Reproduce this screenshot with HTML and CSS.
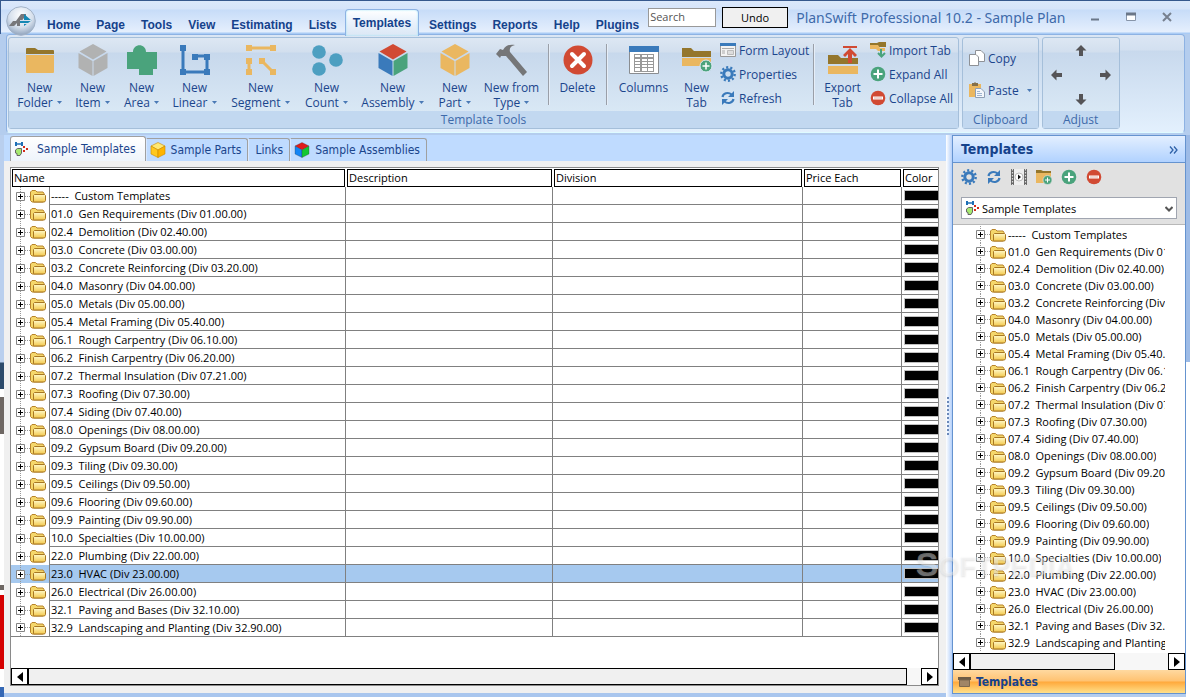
FILE: index.html
```
<!DOCTYPE html>
<html lang="en">
<head>
  <meta charset="UTF-8">
  <title>PlanSwift Professional 10.2 - Sample Plan</title>
  <link rel="stylesheet" href="styles.css">
</head>
<body>

  <!-- shared icons -->
  <svg class="defs" width="0" height="0">
    <linearGradient id="gold" x1="0" y1="0" x2="0" y2="1">
      <stop offset="0" stop-color="#fff9c8"/><stop offset="1" stop-color="#f3c84c"/>
    </linearGradient>
    <symbol id="i-folder" viewBox="0 0 16 14">
      <path d="M.5 11.500V3L2 1.500H5.500L7 3H13L14 4.500V12L13 13H2Z" fill="#f5d76b" stroke="#b8842b"/>
      <path d="M3.500 12.500V6.500L4.500 5.500H14.500L15.500 6.500V11.500L14.500 13H3.500Z" fill="url(#gold)" stroke="#a87722"/>
    </symbol>
    <symbol id="i-gear" viewBox="0 0 16 16">
      <circle cx="8" cy="8" r="4.200" fill="none" stroke="#3a7abb" stroke-width="3"/>
      <circle cx="8" cy="8" r="6.700" fill="none" stroke="#3a7abb" stroke-width="2.400" stroke-dasharray="2.100 2.110"/>
    </symbol>
    <symbol id="i-refresh" viewBox="0 0 16 16">
      <path d="M2.500 7C3 3.500 8 1.500 11.500 4.500M13.500 9C13 12.500 8 14.500 4.500 11.500" fill="none" stroke="#3a7abb" stroke-width="2.200"/>
      <path d="M14 1V7H8ZM2 15V9H8Z" fill="#3a7abb"/>
    </symbol>
    <symbol id="i-plus" viewBox="0 0 16 16">
      <circle cx="8" cy="8" r="7.300" fill="#4aa37c"/>
      <path d="M8 3.500V12.500M3.500 8H12.500" stroke="#fff" stroke-width="2"/>
    </symbol>
    <symbol id="i-minus" viewBox="0 0 16 16">
      <circle cx="8" cy="8" r="7.300" fill="#d14a33"/>
      <path d="M3 8H13" stroke="#fff" stroke-width="3"/>
      <path d="M4 8H12" stroke="#e0b0a8" stroke-width="1"/>
    </symbol>
    <symbol id="i-takeoff" viewBox="0 0 16 16">
      <path d="M2 3H7" stroke="#1e6fb5" stroke-width="1.500"/>
      <path d="M1 1H3V5H1ZM7 1H9V5H7Z" fill="#1e6fb5"/>
      <path d="M1.500 9L3.500 7.500H7.500V12L6 14.500H3V12.500L1.500 12Z" fill="#a6ea70" stroke="#666"/>
      <path d="M9 5H11V7H9ZM9 9H11V11H9ZM12 7H14V9H12Z" fill="#d42a17"/>
    </symbol>
    <symbol id="i-caret" viewBox="0 0 5 3"><path d="M0 0H5L2.500 3Z" fill="#4a79b5"/></symbol>
    <symbol id="i-arrow" viewBox="0 0 12 12"><path d="M6 0L11.500 5.500H8V11H4V5.500H.5Z" fill="#555457"/></symbol>
  </svg>

  <header class="titlebar">
    <button class="orb" aria-label="Application menu">
      <svg width="30" height="30" viewBox="0 0 30 30">
        <defs><radialGradient id="orb" cx=".5" cy=".3" r=".7"><stop offset="0" stop-color="#fff"/><stop offset=".6" stop-color="#d5dfec"/><stop offset="1" stop-color="#8fa3bd"/></radialGradient></defs>
        <circle cx="15" cy="15" r="14.300" fill="url(#orb)" stroke="#a3b3c8"/>
        <path d="M3 20L7 15H10L15 8H20V12H18L14 17V20H11V17L8 20Z" fill="#77777a"/>
        <path d="M18 8L25.500 14.500L18 20V17H14V14H18Z" fill="#1688b4"/>
        <path d="M14 14.500H25M18 17.500H22" stroke="#d5dfec"/>
      </svg>
    </button>
    <nav class="menu">
      <a href="#">Home</a>
      <a href="#">Page</a>
      <a href="#">Tools</a>
      <a href="#">View</a>
      <a href="#">Estimating</a>
      <a href="#">Lists</a>
      <a href="#" class="active">Templates</a>
      <a href="#">Settings</a>
      <a href="#">Reports</a>
      <a href="#">Help</a>
      <a href="#">Plugins</a>
    </nav>
    <input type="text" class="search" placeholder="Search" aria-label="Search">
    <button class="undo">Undo</button>
    <h1>PlanSwift Professional 10.2 - Sample Plan</h1>
    <div class="window-buttons">
      <button aria-label="Minimize"><svg width="12" height="12"><path d="M2 8.500H10" stroke="#6b7788" stroke-width="2"/></svg></button>
      <button aria-label="Maximize"><svg width="12" height="12"><path d="M1.500 2.500H10.500V9.500H1.500Z" fill="#fff" stroke="#8795a9"/><path d="M1 3H11" stroke="#6b7788" stroke-width="3"/></svg></button>
      <button aria-label="Close"><svg width="12" height="12"><path d="M2 2L10 10M10 2L2 10" stroke="#77808f" stroke-width="2"/></svg></button>
    </div>
  </header>

  <section class="ribbon">
    <div class="group">
      <div class="tools">
        <button class="tool mid">
          <svg width="32" height="32"><path d="M2 10V5Q2 4 3 4H11L14 6H29Q30 6 30 7V10Z" fill="#94762c"/><path d="M2 11H30V28Q30 29 29 29H3Q2 29 2 28Z" fill="#eab760"/></svg>
          <span>New<br>Folder <svg class="caret"><use href="#i-caret"/></svg></span>
        </button>
        <button class="tool">
          <svg width="32" height="32" fill="#b1b2b2"><path d="M16 0L29.500 7.500L16 15.500L2.500 7.500Z"/><path d="M1.500 9L15.500 17V32L1.500 24Z"/><path d="M30.500 9L16.500 17V32L30.500 24Z"/></svg>
          <span>New<br>Item <svg class="caret"><use href="#i-caret"/></svg></span>
        </button>
        <button class="tool">
          <svg width="32" height="32" fill="#4aa37c"><path d="M1 8H7C7 -1 20 -1 20 8H31V25H27V31H13V25H1Z"/></svg>
          <span>New<br>Area <svg class="caret"><use href="#i-caret"/></svg></span>
        </button>
        <button class="tool mid">
          <svg width="32" height="32"><path d="M4 4V28H28V12H16" fill="none" stroke="#3a7abb" stroke-width="3"/><path d="M1 1H7V7H1ZM1 25H7V31H1ZM25 25H31V31H25ZM25 10H31V16H25ZM13 10H19V16H13Z" fill="#3a7abb"/></svg>
          <span>New<br>Linear <svg class="caret"><use href="#i-caret"/></svg></span>
        </button>
        <button class="tool wide">
          <svg width="32" height="32"><path d="M4 4H28M4 17V28M17 17L28 28" stroke="#eab760" stroke-width="3"/><path d="M1 1H7V7H1ZM25 1H31V7H25ZM1 14H7V20H1ZM1 25H7V31H1ZM14 14H20V20H14ZM25 25H31V31H25Z" fill="#eab760"/></svg>
          <span>New<br>Segment <svg class="caret"><use href="#i-caret"/></svg></span>
        </button>
        <button class="tool mid">
          <svg width="32" height="32" fill="#4d9fc1"><circle cx="8" cy="8" r="6.800"/><circle cx="8" cy="25" r="6.800"/><circle cx="25" cy="16" r="6.800"/></svg>
          <span>New<br>Count <svg class="caret"><use href="#i-caret"/></svg></span>
        </button>
        <button class="tool wide">
          <svg width="32" height="32"><path d="M16 0L29.500 7.500L16 15.500L2.500 7.500Z" fill="#d14a33"/><path d="M1.500 9L15.500 17V32L1.500 24Z" fill="#3a7abb"/><path d="M30.500 9L16.500 17V32L30.500 24Z" fill="#4aa37c"/></svg>
          <span>New<br>Assembly <svg class="caret"><use href="#i-caret"/></svg></span>
        </button>
        <button class="tool">
          <svg width="32" height="32" fill="#eab760"><path d="M16 0L29.500 7.500L16 15.500L2.500 7.500Z"/><path d="M1.500 9L15.500 17V32L1.500 24Z"/><path d="M30.500 9L16.500 17V32L30.500 24Z"/></svg>
          <span>New<br>Part <svg class="caret"><use href="#i-caret"/></svg></span>
        </button>
        <button class="tool large">
          <svg width="32" height="32"><path d="M0 10L4 5L7 6C10 1 14 0 19 1C15 2 13 4 14 8L31 28L27 32L10 12L5 12L4 14Z" fill="#757678"/></svg>
          <span>New from<br>Type <svg class="caret"><use href="#i-caret"/></svg></span>
        </button>
        <i class="sep"></i>
        <button class="tool">
          <svg width="32" height="32"><circle cx="16" cy="16" r="14.500" fill="#d14a33"/><path d="M10 10L22 22M22 10L10 22" stroke="#fff" stroke-width="4" stroke-linecap="round"/></svg>
          <span>Delete</span>
        </button>
        <i class="sep"></i>
        <button class="tool large">
          <svg width="32" height="32"><path d="M1.500 3H30.500V29.500H1.500Z" fill="#fff" stroke="#8a8d91"/><path d="M1 2H31V8H1Z" fill="#3a7abb"/><path d="M6 10H26V28H6Z" fill="#999"/><path d="M7 11H12V13H7ZM14 11H19V13H14ZM20 11H25V13H20ZM7 15H12V17H7ZM14 15H19V17H14ZM20 15H25V17H20ZM7 18H12V20H7ZM14 18H19V20H14ZM20 18H25V20H20ZM7 21H12V23H7ZM14 21H19V23H14ZM20 21H25V23H20ZM7 24H12V27H7ZM14 24H19V27H14ZM20 24H25V27H20Z" fill="#fff"/></svg>
          <span>Columns</span>
        </button>
        <button class="tool narrow">
          <svg width="32" height="32"><path d="M1 13V4H10L13 7H30V13Z" fill="#94762c"/><path d="M1 14H30V22H1Z" fill="#eab760"/><circle cx="25" cy="22" r="6" fill="#4aa37c" stroke="#dce8f4"/><path d="M25 18.500V25.500M21.500 22H28.500" stroke="#fff" stroke-width="1.500"/></svg>
          <span>New<br>Tab</span>
        </button>
        <div class="small-tools">
          <button><svg width="16" height="16"><path d="M.5 1.500H15.500V14.500H.5Z" fill="#f3f3f3" stroke="#999"/><path d="M0 1H16V4H0Z" fill="#3a7abb"/><path d="M2 6.500H14M2 9H5M2 11H5" stroke="#aaa"/><path d="M7.500 8.500H13.500V12.500H7.500Z" fill="#ddd" stroke="#bbb"/></svg>Form Layout</button>
          <button><svg width="16" height="16"><use href="#i-gear"/></svg>Properties</button>
          <button><svg width="16" height="16"><use href="#i-refresh"/></svg>Refresh</button>
        </div>
        <i class="sep"></i>
        <button class="tool">
          <svg width="32" height="32"><path d="M1 20V11H11L14 14H31V20Z" fill="#94762c"/><path d="M1 22H31V30H1Z" fill="#eab760"/><path d="M16 2H30V4H16ZM23 4L30 11L28 13L25 10V19H21V10L18 13L16 11Z" fill="#d14a33"/></svg>
          <span>Export<br>Tab</span>
        </button>
        <div class="small-tools">
          <button><svg width="16" height="16"><path d="M0 5V1H7L9 0H16V5Z" fill="#94762c"/><path d="M0 3H8L10 6H15V9H8L6 7H0Z" fill="#eab760"/><path d="M11 7V13M8 11L11.500 14.500L15 11" fill="none" stroke="#4aa37c" stroke-width="2"/></svg>Import Tab</button>
          <button><svg width="16" height="16"><use href="#i-plus"/></svg>Expand All</button>
          <button><svg width="16" height="16"><use href="#i-minus"/></svg>Collapse All</button>
        </div>
      </div>
      <h2>Template Tools</h2>
    </div>

    <div class="group">
      <div class="tools clipboard">
        <button><svg width="16" height="16" fill="#fff" stroke="#8e9196"><path d="M6.500.5H12L15.500 4V11.500H6.500Z"/><path d="M.5 4.500H7L9.500 7V15.500H.5Z"/></svg>Copy</button>
        <button><svg width="16" height="16"><path d="M0 2H12V15H0Z" fill="#eab760"/><path d="M3 1H5L6 0L7 1H9V4H3Z" fill="#85704a"/><path d="M6.500 6.500H12L15.500 10V15.500H6.500Z" fill="#f4f7fb" stroke="#8e9fb5"/><path d="M8 9.500H11M8 11.500H13M8 13.500H13" stroke="#9db4d0"/></svg>Paste <svg class="caret"><use href="#i-caret"/></svg></button>
      </div>
      <h2>Clipboard</h2>
    </div>

    <div class="group">
      <div class="tools adjust">
        <button class="up" aria-label="Up"><svg width="12" height="12"><use href="#i-arrow"/></svg></button>
        <button class="left" aria-label="Left"><svg width="12" height="12"><use href="#i-arrow"/></svg></button>
        <button class="right" aria-label="Right"><svg width="12" height="12"><use href="#i-arrow"/></svg></button>
        <button class="down" aria-label="Down"><svg width="12" height="12"><use href="#i-arrow"/></svg></button>
      </div>
      <h2>Adjust</h2>
    </div>
  </section>

  <div class="workspace">
    <div class="edge-left"></div>

    <main>
      <div class="tabs">
        <button class="active"><svg width="16" height="16"><use href="#i-takeoff"/></svg>Sample Templates</button>
        <button><svg width="16" height="16" stroke="#c98a00" stroke-width=".6"><path d="M8 .5L15 4L8 8L1 4Z" fill="#ffe873"/><path d="M1 4L8 8V15.500L1 12Z" fill="#ffc81f"/><path d="M15 4L8 8V15.500L15 12Z" fill="#ffb400"/></svg>Sample Parts</button>
        <button>Links</button>
        <button><svg width="16" height="16" stroke="#333" stroke-width=".3"><path d="M8 .5L15 4L8 8L1 4Z" fill="#e01b1b"/><path d="M1 4L8 8V15.500L1 12Z" fill="#1485f5"/><path d="M15 4L8 8V15.500L15 12Z" fill="#12c832"/></svg>Sample Assemblies</button>
      </div>

      <div class="grid">
        <table>
          <colgroup>
            <col class="col-name"><col class="col-desc"><col><col class="col-price"><col class="col-color">
          </colgroup>
          <thead>
            <tr>
              <th><span>Name</span></th>
              <th><span>Description</span></th>
              <th><span>Division</span></th>
              <th><span>Price Each</span></th>
              <th><span>Color</span></th>
            </tr>
          </thead>
          <tbody id="templateRows"></tbody>
        </table>
        <div class="scrollbar">
          <button aria-label="Scroll left"><svg width="6" height="10"><path d="M6 0V10L0 5Z"/></svg></button>
          <div class="track"><div class="thumb"></div></div>
          <button aria-label="Scroll right"><svg width="6" height="10"><path d="M0 0V10L6 5Z"/></svg></button>
        </div>
      </div>
    </main>

    <div class="splitter"><i></i></div>

    <aside>
      <div class="side-header">
        <h2>Templates</h2>
        <button aria-label="Collapse panel"><svg width="9" height="8"><path d="M1 .5L4 4L1 7.500M5 .5L8 4L5 7.500" fill="none" stroke="#2f62a8" stroke-width="1.300"/></svg></button>
      </div>
      <div class="side-tools">
        <div class="side-icons">
          <button aria-label="Settings"><svg width="16" height="16"><use href="#i-gear"/></svg></button>
          <button aria-label="Refresh"><svg width="16" height="16"><use href="#i-refresh"/></svg></button>
          <button aria-label="Preview"><svg width="16" height="16"><path d="M3 0H13V16H3Z" fill="#eee"/><path d="M1.500 0V16M14.500 0V16" stroke="#666" stroke-width="3"/><path d="M1.500 0V16M14.500 0V16" stroke="#ddd" stroke-width="1.200" stroke-dasharray="1.500 1.500"/><circle cx="8" cy="8" r="4" fill="#fff" stroke="#bbb"/><path d="M7 5.500L10 8L7 10.500Z" fill="#111"/></svg></button>
          <button aria-label="New folder"><svg width="16" height="16"><path d="M0 1H5L7 2H15V4H0Z" fill="#94762c"/><path d="M0 4H15V14H0Z" fill="#eab760"/><circle cx="11.500" cy="11" r="4.500" fill="#4aa37c" stroke="#e1e1e1" stroke-width=".7"/><path d="M11.500 8.500V13.500M9 11H14" stroke="#fff"/></svg></button>
          <button aria-label="Expand all"><svg width="16" height="16"><use href="#i-plus"/></svg></button>
          <button aria-label="Collapse all"><svg width="16" height="16"><use href="#i-minus"/></svg></button>
        </div>
        <div class="picker">
          <svg class="picker-icon" width="16" height="16"><use href="#i-takeoff"/></svg>
          <select aria-label="Template set"><option>Sample Templates</option></select>
          <svg class="picker-arrow" width="8" height="6"><path d="M.5 1L4 4.500L7.500 1" fill="none" stroke="#555" stroke-width="2"/></svg>
        </div>
      </div>
      <ul class="tree" id="templateTree"></ul>
      <div class="scrollbar side-scroll">
        <button aria-label="Scroll left"><svg width="6" height="10"><path d="M6 0V10L0 5Z"/></svg></button>
        <div class="track"><div class="thumb"></div></div>
        <button aria-label="Scroll right"><svg width="6" height="10"><path d="M0 0V10L6 5Z"/></svg></button>
      </div>
      <button class="side-footer"><svg width="13" height="10"><path d="M0 0H13V3H0Z" fill="#6e5c45"/><path d="M1.500 3H11.500V9.500H1.500Z" fill="#a08566" stroke="#7c684e"/></svg>Templates</button>
    </aside>

    <div class="edge-right"></div>
    <div class="watermark"><b>S</b>OFTPEDIA</div>
  </div>

  <script>
    const templates = [
      ['-----', 'Custom Templates'],
      ['01.0', 'Gen Requirements (Div 01.00.00)'],
      ['02.4', 'Demolition (Div 02.40.00)'],
      ['03.0', 'Concrete (Div 03.00.00)'],
      ['03.2', 'Concrete Reinforcing (Div 03.20.00)'],
      ['04.0', 'Masonry (Div 04.00.00)'],
      ['05.0', 'Metals (Div 05.00.00)'],
      ['05.4', 'Metal Framing (Div 05.40.00)'],
      ['06.1', 'Rough Carpentry (Div 06.10.00)'],
      ['06.2', 'Finish Carpentry (Div 06.20.00)'],
      ['07.2', 'Thermal Insulation (Div 07.21.00)'],
      ['07.3', 'Roofing (Div 07.30.00)'],
      ['07.4', 'Siding (Div 07.40.00)'],
      ['08.0', 'Openings (Div 08.00.00)'],
      ['09.2', 'Gypsum Board (Div 09.20.00)'],
      ['09.3', 'Tiling (Div 09.30.00)'],
      ['09.5', 'Ceilings (Div 09.50.00)'],
      ['09.6', 'Flooring (Div 09.60.00)'],
      ['09.9', 'Painting (Div 09.90.00)'],
      ['10.0', 'Specialties (Div 10.00.00)'],
      ['22.0', 'Plumbing (Div 22.00.00)'],
      ['23.0', 'HVAC (Div 23.00.00)'],
      ['26.0', 'Electrical (Div 26.00.00)'],
      ['32.1', 'Paving and Bases (Div 32.10.00)'],
      ['32.9', 'Landscaping and Planting (Div 32.90.00)']
    ];
    const selected = '23.0';

    const branch = `<span class="branch"><svg width="9" height="9"><path d="M.5.5H8.500V8.500H.5Z" fill="#fff" stroke="#848484"/><path d="M2 4.500H7M4.500 2V7" stroke="#000"/></svg><i></i><svg width="16" height="14"><use href="#i-folder"/></svg></span>`;

    let rows = '';
    let items = '';
    templates.forEach(([code, name]) => {
      const label = `<span class="label">${code}&nbsp; ${name}</span>`;
      rows += `<tr class="${code === selected ? 'selected' : ''}"><td class="name"><div>${branch}${label}</div></td><td></td><td></td><td></td><td class="color"><i></i></td></tr>`;
      items += `<li>${branch}${label}</li>`;
    });
    document.getElementById('templateRows').innerHTML = rows;
    document.getElementById('templateTree').innerHTML = items;
  </script>

</body>
</html>
```
FILE: styles.css
```
* {
  box-sizing: border-box;
}

body {
  margin: 0;
  height: 100vh;
  display: flex;
  flex-direction: column;
  overflow: hidden;
  font-family: "Open Sans", Tahoma, sans-serif;
  font-size: 11px;
  color: #000;
  background: #b4cdee;
  border-top: 1px solid #36588d;
}

.defs {
  position: absolute;
}

button {
  padding: 0;
  border: none;
  background: none;
  font: inherit;
  color: inherit;
}

h1, h2 {
  margin: 0;
  font-weight: normal;
}

svg {
  flex: none;
}

/* title bar */
.titlebar {
  flex: none;
  display: flex;
  align-items: flex-start;
  height: 33px;
  padding: 0 17px 0 5px;
  background: linear-gradient(#dbe8fb 0, #d6e4fa 8px, #c7dcf8 9px, #e5effd 31px, #a9cbf5 32px);
  border-left: 1px solid #36588d;
}

.orb {
  height: 30px;
  margin: 5px 3px 0 0;
  z-index: 1;
}

.menu {
  display: flex;
  height: 35px;
  padding-top: 8px;
  z-index: 1;
}

.menu a {
  padding: 8px 8px 0;
  font: bold 12px/16px "Liberation Sans", Arial, sans-serif;
  color: #15428b;
  text-decoration: none;
}

.menu a.active {
  margin: 0 2px 0 0;
  padding: 5px 7px 0;
  border: 1px solid #8db2e3;
  border-bottom: none;
  border-radius: 4px 4px 0 0;
  background: linear-gradient(#fff, #eaf2fc 12px, #dbe7f5);
  box-shadow: inset 0 0 2px #8fe0f8;
}

.search {
  width: 68px;
  height: 19px;
  margin: 7px 6px 0 1px;
  padding: 0 1px 2px;
  border: 1px solid #999;
  background: #fff;
  font: inherit;
}

.search::placeholder {
  color: #555;
  opacity: 1;
}

.undo {
  width: 66px;
  height: 21px;
  margin-top: 6px;
  border: 1px solid #000;
  background: #f0f0f0;
}

.titlebar h1 {
  margin: 6px 0 0 8px;
  font: 14px/22px "Noto Sans", "Segoe UI", sans-serif;
  color: #3e6aaa;
  white-space: nowrap;
}

.window-buttons {
  display: flex;
  gap: 24px;
  margin: 10px 0 0 auto;
}

.window-buttons button {
  height: 12px;
}

/* ribbon */
.ribbon {
  flex: none;
  display: flex;
  gap: 3px;
  height: 99px;
  margin: 0 5px 2px 6px;
  padding: 2px 1px 3px;
  border: 1px solid #8db2e3;
  border-bottom-color: #dffbff;
  border-radius: 4px;
  background: linear-gradient(#dbe6f4 0, #d3e0f0 15px, #c8d9ed 16px, #e3f0fd);
  font-family: "Open Sans", "Segoe UI", sans-serif;
  font-size: 12px;
  color: #1b458c;
}

.group {
  display: flex;
  flex-direction: column;
  border: 1px solid #a5bfda;
  border-radius: 3px;
  background: linear-gradient(#dde7f3 0, #d2dfee 14px, #c7d8ec 15px, #d9e8f5 74px);
}

.group h2 {
  padding: 0 6px;
  background: #c2d8f0;
  font-size: 12px;
  line-height: 17px;
  color: #3e6aaa;
  text-align: center;
}

.tools {
  flex: 1;
  display: flex;
  padding: 0 3px 0 2px;
}

.tool {
  display: flex;
  flex-direction: column;
  align-items: center;
  width: 49px;
  padding-top: 6px;
  line-height: 15px;
  white-space: nowrap;
}

.tool span {
  margin-top: 4px;
}

.tool.narrow {
  width: 41px;
}

.tool.mid {
  width: 57px;
}

.tool.large {
  width: 65px;
}

.tool.wide {
  width: 75px;
}

.caret {
  width: 5px;
  height: 3px;
  margin-left: 1px;
  vertical-align: 3px;
}

.sep {
  width: 1px;
  height: 61px;
  margin: 6px 4px 0;
  background: #9a9fa8;
  box-shadow: 1px 0 0 #e6eef8;
}

.small-tools {
  display: flex;
  flex-direction: column;
  width: 92px;
  padding: 0 0 0 3px;
}

.small-tools button {
  display: flex;
  align-items: center;
  gap: 3px;
  height: 24px;
  white-space: nowrap;
}

.sep + .tool + .small-tools {
  width: 88px;
}

.tools.clipboard {
  flex-direction: column;
  gap: 14px;
  padding: 11px 6px 0;
}

.clipboard button {
  display: flex;
  align-items: center;
  gap: 3px;
  height: 18px;
}

.clipboard .caret {
  margin-left: 5px;
}

.tools.adjust {
  display: grid;
  grid-template-columns: repeat(3, 24px);
  grid-template-rows: repeat(3, 24px);
  padding: 1px 2px 0;
}

.adjust button {
  display: flex;
  align-items: center;
  justify-content: center;
}

.adjust .up {
  grid-area: 1 / 2;
}

.adjust .left {
  grid-area: 2 / 1;
}

.adjust .right {
  grid-area: 2 / 3;
}

.adjust .down {
  grid-area: 3 / 2;
}

.left svg {
  transform: rotate(-90deg);
}

.right svg {
  transform: rotate(90deg);
}

.down svg {
  transform: rotate(180deg);
}

/* workspace */
.workspace {
  flex: 1;
  min-height: 0;
  display: grid;
  grid-template-columns: 4px 1fr 6px 234px 4px;
  grid-template-rows: minmax(0, 1fr);
  position: relative;
}

.edge-left {
  background: linear-gradient(#b9cfee 227px, #2b4a6b 228px 254px, #fff 254px 262px, #6e6763 262px 299px, #fff 299px 450px, #6e6763 450px 455px, #fff 455px 460px, #d50000 460px 534px, #fff 534px 552px, #3568b5 552px);
}

.edge-right {
  background: linear-gradient(#9dbbe6 227px, #fff 227px);
}

main {
  display: flex;
  flex-direction: column;
  min-width: 0;
  padding-bottom: 7px;
  background: #f0f0f0;
  border-bottom: 4px solid #a9c6ee;
}

.tabs {
  display: flex;
  align-items: flex-end;
  flex: none;
  height: 26px;
  padding-left: 6px;
  background: #bfdbff;
  font-family: "DejaVu Sans Condensed", Tahoma, sans-serif;
  font-size: 12px;
  color: #1b458c;
}

.tabs button {
  display: flex;
  align-items: center;
  gap: 5px;
  height: 23px;
  padding: 0 6px 0 3px;
  border: 1px solid #a0a0a0;
  border-bottom: none;
  border-left-color: #d8e8ff;
  border-radius: 0 3px 0 0;
  white-space: nowrap;
}

.tabs button.active {
  gap: 7px;
  height: 25px;
  padding: 0 9px 0 3px;
  border-left-color: #a0a0a0;
  border-radius: 3px 3px 0 0;
  background: linear-gradient(#fff, #eef4fb);
}

.tabs button:nth-child(3) {
  padding: 0 6px;
}

.grid {
  flex: 1;
  min-height: 0;
  display: flex;
  flex-direction: column;
  justify-content: space-between;
  margin: 6px 7px 0 6px;
  border: 1px solid #8a8a8a;
  background: #fff;
  overflow: hidden;
}

table {
  width: 100%;
  table-layout: fixed;
  border-collapse: separate;
  border-spacing: 0;
}

.col-name {
  width: 335px;
}

.col-desc {
  width: 207px;
}

.col-price {
  width: 99px;
}

.col-color {
  width: 36px;
}

th {
  padding: 1px 1px 0;
  font-weight: normal;
  text-align: left;
}

th span {
  display: block;
  height: 18px;
  padding-left: 1px;
  border: 1px solid #000;
  line-height: 16px;
}

th:last-child {
  padding-right: 0;
}

th:last-child span {
  border-right: none;
}

td {
  height: 18px;
  padding: 0;
  border-right: 1px solid #808080;
  border-bottom: 1px solid #808080;
}

td.name {
  border-bottom: none;
}

tr:last-child td.name {
  border-bottom: 1px solid #808080;
}

.name div {
  display: flex;
  height: 18px;
}

tr:last-child .name div {
  height: 17px;
}

.name .label {
  flex: 1;
  padding-left: 1px;
  border-left: 1px solid #808080;
  border-bottom: 1px solid #808080;
  line-height: 17px;
}

tr:last-child .label {
  border-bottom: none;
}

.label {
  white-space: nowrap;
  overflow: hidden;
}

.branch {
  flex: none;
  display: flex;
  align-items: center;
  width: 38px;
  padding-left: 5px;
  background: repeating-linear-gradient(#999 0 1px, transparent 1px 2px) 9px 0 / 1px 100% no-repeat;
}

.branch i {
  width: 5px;
  border-top: 1px dotted #999;
}

.selected {
  background: #a6c9ef;
}

td.color {
  padding: 0 0 0 2px;
  border-right: none;
}

.color i {
  display: block;
  height: 11px;
  border: 1px solid #c0c0c0;
  border-right: none;
  background: #000;
}

/* scroll bars */
.scrollbar {
  flex: none;
  display: flex;
  height: 17px;
}

.scrollbar button {
  display: flex;
  align-items: center;
  justify-content: center;
  width: 17px;
  border: 1px solid #000;
  background: #fff;
}

.track {
  flex: 1;
  display: flex;
  padding-right: 14px;
  background: #f7f7f7;
}

.thumb {
  flex: 1;
  border: 1px solid #000;
  background: #f0f0f0;
}

.splitter {
  display: flex;
  align-items: center;
  background: linear-gradient(to right, #fff, #b4d0fa);
}

.splitter i {
  width: 2px;
  height: 38px;
  margin-left: 1px;
  background: repeating-linear-gradient(#6a88b8 0 2px, transparent 2px 4px);
}

/* side panel */
aside {
  display: flex;
  flex-direction: column;
  margin-bottom: 3px;
  border: 1px solid #6593cf;
  background: #fff;
}

.side-header {
  display: flex;
  align-items: center;
  justify-content: space-between;
  height: 27px;
  padding: 0 7px 0 8px;
  border-bottom: 1px solid #6593cf;
  background: linear-gradient(#e3efff, #b1d2ff);
}

.side-header h2 {
  font: bold 14px "DejaVu Sans Condensed", Tahoma, sans-serif;
  color: #15428b;
}

.side-tools {
  padding: 6px 8px 5px;
  border-bottom: 1px solid #b8b8b8;
  background: #e1e1e1;
}

.side-icons {
  display: flex;
  gap: 9px;
  margin-bottom: 12px;
}

.side-icons svg {
  display: block;
}

.picker {
  position: relative;
}

.picker select {
  display: block;
  appearance: none;
  width: 100%;
  height: 22px;
  padding: 0 20px;
  border: 1px solid #a0a5b0;
  border-radius: 0;
  background: #fff;
  color: #000;
  font: inherit;
}

.picker-icon {
  position: absolute;
  left: 4px;
  top: 3px;
}

.picker-arrow {
  position: absolute;
  right: 4px;
  top: 9px;
}

.tree {
  flex: 1;
  min-height: 0;
  margin: 0 20px 0 18px;
  padding: 1px 0 0;
  list-style: none;
  overflow: hidden;
}

.tree li {
  display: flex;
  height: 17px;
  line-height: 17px;
}

.side-scroll .track {
  padding-right: 53px;
}

.tree .branch {
  width: 37px;
}

.side-footer {
  flex: none;
  display: flex;
  align-items: center;
  gap: 5px;
  height: 23px;
  padding-left: 5px;
  background: linear-gradient(#ffd9a0, #ffc271 11px, #ffa93c 12px, #ffe08a);
  font: bold 12px "DejaVu Sans Condensed", Tahoma, sans-serif;
  color: #15428b;
}

.watermark {
  position: absolute;
  right: 115px;
  bottom: 112px;
  font: bold 27px/36px "Liberation Sans", Arial, sans-serif;
  color: rgba(255, 255, 255, 0.4);
  text-shadow: 0 1px 2px rgba(120, 120, 120, 0.2);
  pointer-events: none;
}

.watermark b {
  font-size: 34px;
}
```
